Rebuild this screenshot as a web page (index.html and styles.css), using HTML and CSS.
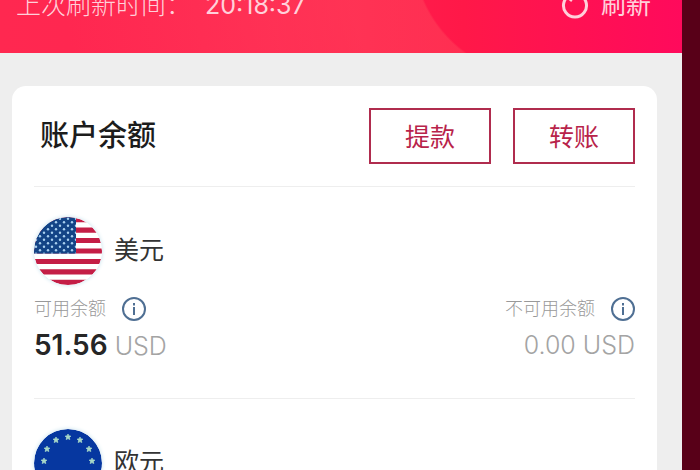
FILE: index.html
```html
<!DOCTYPE html>
<html lang="zh-CN">
<head>
<meta charset="utf-8">
<meta name="viewport" content="width=device-width, initial-scale=1">
<title>账户余额</title>
<link rel="stylesheet" href="styles.css">
</head>
<body>
<svg class="defs" aria-hidden="true">
  <defs>
    <pattern id="stars" width="8" height="7" patternUnits="userSpaceOnUse">
      <circle cx="2" cy="1.800" r="1.200" fill="#a9d0f0"/>
      <circle cx="6" cy="5.300" r="1.200" fill="#a9d0f0"/>
    </pattern>
    <clipPath id="round"><circle cx="34" cy="34" r="34"/></clipPath>
    <path id="star" fill="#a8d8c8" stroke="#a8d8c8" stroke-width=".8" stroke-linejoin="round" d="M0-2.900 .9-1.100 2.800-.9 1.400.6 1.800 2.500 0 1.600-1.800 2.500-1.400.6-2.800-.9-.9-1.100Z"/>
    <g id="info" fill="none" stroke="#4f6f93" stroke-width="2">
      <circle cx="12" cy="12" r="11"/>
      <path d="M12 10v8M12 6v2.500"/>
    </g>
  </defs>
</svg>
<div class="app">
  <header class="topbar">
    <p class="updated"><span>上次刷新时间：</span><time>20:18:37</time></p>
    <button class="refresh" type="button">
      <svg width="28" height="28" viewBox="0 0 28 28" fill="none" stroke="currentColor" stroke-width="3" aria-hidden="true">
        <path d="M18 3.700A11.500 11.500 0 1 1 10 3.700"/>
        <path d="M9 10 12 6 8 3"/>
      </svg>
      <span>刷新</span>
    </button>
  </header>
  <main class="card">
    <div class="card-head">
      <h1>账户余额</h1>
      <div class="actions">
        <button type="button">提款</button>
        <button type="button">转账</button>
      </div>
    </div>
    <section class="account">
      <h2>
        <svg class="flag" viewBox="0 0 68 68" aria-hidden="true">
          <g clip-path="url(#round)">
            <rect width="68" height="68" fill="#fff"/>
            <path stroke="#c41e46" stroke-width="5.230" d="M0 2.600H68M0 13.100H68M0 23.500H68M0 34H68M0 44.500H68M0 54.900H68M0 65.400H68"/>
            <rect width="42" height="36.600" fill="#134486"/>
            <rect width="42" height="36.600" fill="url(#stars)"/>
          </g>
        </svg>
        <span>美元</span>
      </h2>
      <div class="balances">
        <div class="balance">
          <p class="label">可用余额 <svg viewBox="0 0 24 24" aria-hidden="true"><use href="#info"/></svg></p>
          <p class="amount"><strong>51.56</strong> USD</p>
        </div>
        <div class="balance end">
          <p class="label">不可用余额 <svg viewBox="0 0 24 24" aria-hidden="true"><use href="#info"/></svg></p>
          <p class="amount">0.00 USD</p>
        </div>
      </div>
    </section>
    <section class="account">
      <h2>
        <svg class="flag" viewBox="0 0 68 68" aria-hidden="true">
          <circle cx="34" cy="34" r="34" fill="#0637a0"/>
          <use href="#star" x="34" y="8"/>
          <use href="#star" x="46" y="11"/>
          <use href="#star" x="55" y="20"/>
          <use href="#star" x="58" y="32"/>
          <use href="#star" x="55" y="44"/>
          <use href="#star" x="46" y="53"/>
          <use href="#star" x="34" y="56"/>
          <use href="#star" x="22" y="53"/>
          <use href="#star" x="13" y="44"/>
          <use href="#star" x="10" y="32"/>
          <use href="#star" x="13" y="20"/>
          <use href="#star" x="22" y="11"/>
        </svg>
        <span>欧元</span>
      </h2>
    </section>
  </main>
</div>
</body>
</html>
```
FILE: styles.css
```css
* {
  box-sizing: border-box;
}

body {
  margin: 0;
  height: 100vh;
  overflow: hidden;
  background: #580018;
  color: #333;
  font-family: Inter, "Noto Sans CJK SC", sans-serif;
}

h1, h2, p {
  margin: 0;
}

button {
  font: inherit;
  cursor: pointer;
}

.defs {
  position: absolute;
  width: 0;
  height: 0;
}

.app {
  height: 100vh;
  overflow: hidden;
  margin-right: 18px;
  background: #eee;
}

.topbar {
  display: flex;
  justify-content: space-between;
  padding: 0 31px 43px 16px;
  background:
    radial-gradient(circle at 540px -50px, transparent 126px, rgba(255, 80, 96, 0.4) 128px, rgba(255, 80, 96, 0.4) 200px, transparent 480px) 0 0 / 540px 100% no-repeat,
    linear-gradient(90deg, #ff2850 0%, #ff2450 40%, #ff1848 68%, #ff0a5c 100%);
  color: #ffd0da;
  font-size: 25px;
  line-height: 10px;
}

.updated {
  display: flex;
  gap: 14px;
}

.updated span {
  font-weight: 300;
}

.refresh {
  display: flex;
  align-items: center;
  gap: 12px;
  height: 10px;
  padding: 0;
  border: 0;
  background: none;
  color: inherit;
}

.card {
  margin: 33px 25px 0 12px;
  padding: 22px 22px 30px;
  border-radius: 14px;
  background: #fff;
}

.card-head {
  display: flex;
  align-items: center;
  justify-content: space-between;
  padding-bottom: 22px;
}

h1 {
  padding-left: 6px;
  color: #1c1c1c;
  font-size: 29px;
  font-weight: 500;
  line-height: 40px;
}

.actions {
  display: flex;
  gap: 22px;
}

.actions button {
  width: 122px;
  height: 56px;
  padding: 0 0 2px;
  border: 2px solid #b02c4e;
  background: none;
  color: #b8234a;
  font-size: 25px;
}

.account {
  padding: 30px 0 36px;
  border-top: 1px solid #eee;
}

h2 {
  display: flex;
  align-items: center;
  gap: 12px;
  font-size: 25px;
  font-weight: 400;
}

h2 span {
  padding-bottom: 6px;
}

.flag {
  width: 68px;
  height: 68px;
  border-radius: 50%;
  box-shadow: 0 0 4px #c4e0ec;
}

.balances {
  display: flex;
  justify-content: space-between;
  padding-top: 12px;
}

.label {
  display: flex;
  align-items: center;
  gap: 16px;
  color: #999;
  font-size: 18px;
  font-weight: 300;
  line-height: 24px;
}

.label svg {
  width: 24px;
  height: 24px;
}

.amount {
  padding-top: 8px;
  color: #a4a4a4;
  font-size: 25px;
  font-weight: 300;
  line-height: 32px;
}

.amount strong {
  color: #262626;
  font-size: 28px;
  font-weight: 600;
}

.end .label {
  justify-content: flex-end;
}

.end .amount {
  text-align: right;
}
```
